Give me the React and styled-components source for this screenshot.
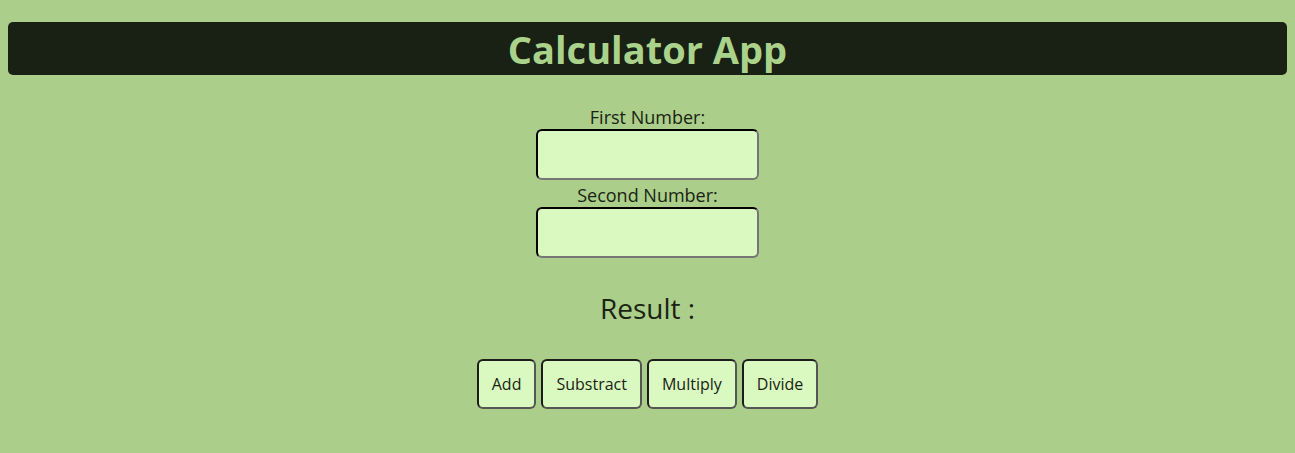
import styled, { createGlobalStyle } from "styled-components";

const GlobalStyle = createGlobalStyle`
  body {
    margin: 8px;
    background-color: #abcf8a;
    font-family: "Open Sans", "Noto Sans", sans-serif;
    color: #1a2314;
  }
`;

const Wrapper = styled.div`
  display: flex;
  flex-direction: column;
  align-items: center;
  padding-top: 14px;
`;

const Header = styled.h1`
  width: 100%;
  height: 53px;
  margin: 0;
  display: flex;
  align-items: center;
  justify-content: center;
  background-color: #182113;
  color: #abd28b;
  border-radius: 5px;
  font-size: 38px;
  font-weight: 700;
`;

const Form = styled.div`
  display: flex;
  flex-direction: column;
  align-items: center;
  margin-top: 31px;
`;

const Label = styled.label`
  font-size: 18px;
  line-height: 23px;
  margin-top: ${(p) => (p.$first ? "0" : "4px")};
`;

const Input = styled.input`
  width: 223px;
  height: 51px;
  box-sizing: border-box;
  background-color: #d9f9c0;
  border: 2px inset #767676;
  border-top-color: #1c1c1c;
  border-left-color: #1c1c1c;
  border-radius: 6px;
`;

const Result = styled.div`
  font-size: 28px;
  margin-top: 32px;
  line-height: 36px;
`;

const ButtonRow = styled.div`
  display: flex;
  gap: 5px;
  margin-top: 33px;
`;

const Button = styled.button`
  height: 50px;
  padding: 0 13px;
  background-color: #d9f9c0;
  border: 2px solid #1c1c1c;
  border-right-color: #555;
  border-bottom-color: #555;
  border-radius: 6px;
  font-family: "Open Sans", "Noto Sans", sans-serif;
  font-size: 16px;
  color: #1a2314;
`;

const App = () => {
  return (
    <Wrapper>
      <GlobalStyle />
      <Header>Calculator App</Header>
      <Form>
        <Label $first>First Number:</Label>
        <Input type="text" />
        <Label>Second Number:</Label>
        <Input type="text" />
      </Form>
      <Result>Result :</Result>
      <ButtonRow>
        {["Add", "Substract", "Multiply", "Divide"].map((name) => (
          <Button key={name}>{name}</Button>
        ))}
      </ButtonRow>
    </Wrapper>
  );
};

export default App;
